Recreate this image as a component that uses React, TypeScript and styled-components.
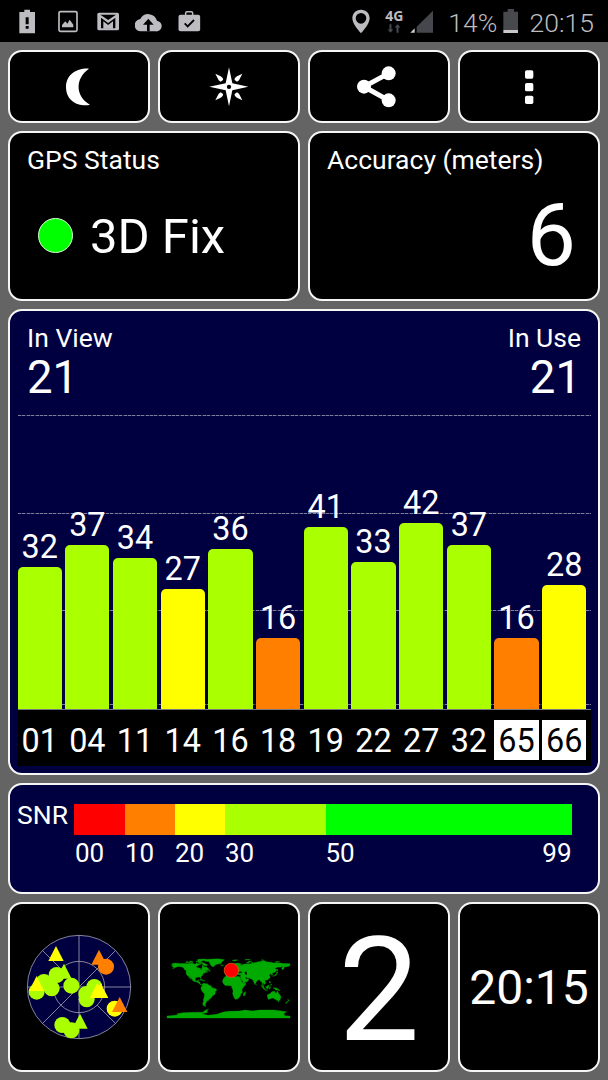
import React from "react";
import styled, { createGlobalStyle } from "styled-components";

const GlobalStyle = createGlobalStyle`
  html, body { margin: 0; padding: 0; background: #646464; }
  * { box-sizing: border-box; }
  svg { display: block; flex: none; }
`;

const NAVY = "#000040";
const LIME = "#aaff00";
const YELLOW = "#ffff00";
const ORANGE = "#ff8000";

const Screen = styled.div`
  width: 608px;
  height: 1080px;
  overflow: hidden;
  background: #646464;
  color: #fff;
  font-family: Roboto, "Liberation Sans", sans-serif;
  display: flex;
  flex-direction: column;
`;

const StatusBar = styled.header`
  height: 42px;
  flex: none;
  background: #000;
  color: #bdbdc1;
  display: flex;
  justify-content: space-between;
  padding: 0 14px 0 19px;
`;

const StatusGroup = styled.div`
  display: flex;
  align-items: center;
`;

const Network = styled.div`
  width: 21px;
  height: 42px;
  margin: 0 4.6px 0 14px;
  padding-top: 8px;
  display: flex;
  flex-direction: column;
  align-items: center;
`;

const NetworkLabel = styled.span`
  font: 700 14px/15px "Open Sans", "Noto Sans", sans-serif;
  height: 16px;
`;

const StatusText = styled.span<{ $width: number; $left: number }>`
  font-size: 26.5px;
  font-weight: 350;
  line-height: 46px;
  height: 42px;
  width: ${(p) => p.$width}px;
  margin-left: ${(p) => p.$left}px;
  white-space: nowrap;
`;

const Dashboard = styled.main`
  display: grid;
  grid-template-columns: repeat(4, 142px);
  grid-template-rows: 73px 170px 466px 111px 170px;
  gap: 8px;
  padding: 8px;
`;

const Card = styled.section<{ $span?: number; $navy?: boolean }>`
  grid-column: span ${(p) => p.$span ?? 1};
  border: 2px solid #f6f6f6;
  border-radius: 14px;
  background: ${(p) => (p.$navy ? NAVY : "#000")};
  display: flex;
  flex-direction: column;
  min-width: 0;
`;

const CenterCard = styled(Card)`
  align-items: center;
  justify-content: center;
`;

const ActionButton = styled.button`
  border: 2px solid #f6f6f6;
  border-radius: 14px;
  background: #000;
  padding: 0;
  display: flex;
  align-items: center;
  justify-content: center;
`;

const Label = styled.div`
  font-size: 26.5px;
  line-height: 30px;
  white-space: nowrap;
`;

const CardTitle = styled(Label)`
  margin: 12px 0 0 17px;
`;

const FixRow = styled.div`
  display: flex;
  align-items: center;
  height: 60px;
  margin: 30px 0 0 28px;
  gap: 17px;
`;

const FixLamp = styled.span`
  width: 35px;
  height: 35px;
  border-radius: 50%;
  border: 1px solid #d8ffd8;
  background: #00ff00;
`;

const FixText = styled.span`
  font-size: 49px;
  line-height: 60px;
  padding-top: 3px;
`;

const AccuracyValue = styled.div`
  font-size: 87.5px;
  line-height: 90px;
  margin: 15px 22px 0 0;
  text-align: right;
`;

const Counts = styled.div`
  display: flex;
  justify-content: space-between;
  padding: 12px 17px 0;
  height: 104px;
`;

const Count = styled.div<{ $right?: boolean }>`
  text-align: ${(p) => (p.$right ? "right" : "left")};
`;

const CountValue = styled.div`
  font-size: 45.5px;
  line-height: 50px;
`;

const Chart = styled.div`
  position: relative;
  width: 573px;
  height: 295px;
  margin-left: 7.6px;
  border-bottom: 1px solid #77777f;
  display: flex;
  align-items: flex-end;
  gap: 3.5px;
`;

const GridLine = styled.div`
  position: absolute;
  left: 0;
  right: 0;
  height: 1px;
  background: repeating-linear-gradient(90deg, #7d7d9c 0 3px, #2a2a58 3px 4.4px);
`;

const BarColumn = styled.div`
  position: relative;
  width: 44.2px;
  flex: none;
  display: flex;
  flex-direction: column;
  align-items: center;
`;

const BarValue = styled.span`
  font-size: 32.4px;
  line-height: 32px;
  margin-bottom: 4px;
`;

const Bar = styled.div<{ $color: string }>`
  width: 100%;
  border-radius: 5px 5px 0 0;
  background: ${(p) => p.$color};
`;

const Axis = styled.div`
  width: 573px;
  height: 56px;
  margin-left: 7.6px;
  background: #000;
  display: flex;
  align-items: center;
  gap: 3.5px;
  padding-top: 4px;
`;

const SatelliteId = styled.span<{ $inverse: boolean }>`
  width: 44.2px;
  height: 40px;
  flex: none;
  text-align: center;
  font-size: 32.4px;
  line-height: 43px;
  color: ${(p) => (p.$inverse ? "#000" : "#fff")};
  background: ${(p) => (p.$inverse ? "#fff" : "transparent")};
`;

const SnrRow = styled.div`
  display: flex;
  padding: 19px 0 0 7px;
`;

const SnrLabel = styled(Label)`
  width: 57px;
  line-height: 22px;
`;

const Scale = styled.div`
  display: flex;
`;

const ScaleStep = styled.div<{ $width: number }>`
  width: ${(p) => p.$width}px;
  font-size: 26px;
  line-height: 37px;
  display: flex;
  flex-direction: column;
`;

const Swatch = styled.div<{ $color: string }>`
  height: 31px;
  background: ${(p) => p.$color};
`;

const StepLabels = styled.div<{ $first: boolean }>`
  display: flex;
  justify-content: space-between;
  padding-left: ${(p) => (p.$first ? 1 : 0)}px;
  padding-right: 0.5px;
`;

const BigNumber = styled.div`
  font-size: 145px;
  line-height: 170px;
  padding-top: 5px;
`;

const Clock = styled.div`
  font-size: 48px;
  line-height: 60px;
  padding-top: 1px;
  white-space: nowrap;
`;

const GREY = "#bdbdc1";

function StatusIcon({ x, w, children }: { x: number; w: number; children: React.ReactNode }) {
  return (
    <svg width={w / 3} height={42} viewBox={`${x} 0 ${w} 126`} fill={GREY}>
      {children}
    </svg>
  );
}

const bars = [
  { id: "01", snr: 32 },
  { id: "04", snr: 37 },
  { id: "11", snr: 34 },
  { id: "14", snr: 27 },
  { id: "16", snr: 36 },
  { id: "18", snr: 16 },
  { id: "19", snr: 41 },
  { id: "22", snr: 33 },
  { id: "27", snr: 42 },
  { id: "32", snr: 37 },
  { id: "65", snr: 16 },
  { id: "66", snr: 28 },
];

const snrColor = (v: number) => (v < 10 ? "#ff0000" : v < 20 ? ORANGE : v < 30 ? YELLOW : v < 50 ? LIME : "#00ff00");

const steps = [
  { labels: ["00"], width: 51, color: "#ff0000" },
  { labels: ["10"], width: 50, color: ORANGE },
  { labels: ["20"], width: 50, color: YELLOW },
  { labels: ["30"], width: 100.5, color: LIME },
  { labels: ["50", "99"], width: 246.5, color: "#00ff00" },
];

/* Coastlines as longitude,latitude pairs */
const land = [
  "-168,66 -162,67 -166,69 -156,71 -141,70 -128,70 -115,68 -108,68 -96,68 -94,72 -90,69 -82,69 -81,67 -86,66 -94,61 -94,58.5 -88,57 -82,55 -82,52.5 -79,51.5 -79,54.5 -77,57 -78,62 -73,62 -69,59 -65,60 -62,57 -57,53 -60,50 -66,50 -70,47 -65,49 -64,46 -60,46 -66,43.5 -70,43.5 -70,41.5 -74,40.5 -76,37 -76,35 -81,31.5 -80,26 -81.5,25.5 -83,29.5 -85,30 -90,29.5 -94,29.5 -97,27.5 -97.5,22 -95,18.5 -91,18.7 -90,21 -87,21.5 -88,16 -83.5,15 -83.5,11 -81,9 -77,8.5 -80,7.5 -83,8.5 -86,11 -88,13 -94,16 -99,16.7 -105,20 -105.5,22.5 -109,26 -112.5,31 -114.7,31.5 -110,24 -110,23 -112,25 -115,28 -117,32.5 -120.5,34.5 -124,40 -124,47.5 -123,49 -128,51 -130,55 -134,58.5 -140,60 -146,61 -151,59.5 -154,58.5 -160,55.5 -164,54.7 -158,58 -162,59 -165,61 -165,63 -161,64.5 -166,64.5",
  "-64,67 -62,66 -65,62.5 -72,64 -78,65 -73,68 -80,70 -89,71 -88,73.5 -80,73.5 -72,71",
  "-117,69 -105,69 -102,70 -106,73 -117,73",
  "-125,72 -117,73 -120,76 -125,74",
  "-90,77 -80,76 -62,82 -70,83.2 -90,82",
  "-95,75 -80,74.5 -80,76 -95,77",
  "-115,75 -105,75 -105,77 -115,76.5",
  "-73,78 -68,76 -58,75.5 -54,70 -53,66 -48,61 -43,60 -40,65 -32,68 -22,70 -19,75 -12,81 -30,83.5 -60,82",
  "-85,22 -80,23.5 -74,20.5 -78,20",
  "-74,18.3 -73,20 -68.5,18.5",
  "-59,48 -56,51.5 -53,47",
  "-77,8.5 -75,11 -72,12 -71,11 -62,10.7 -57,6 -51,4.5 -50,0 -44,-2.5 -40,-3 -35,-6 -35,-9 -39,-13 -39,-18 -41,-22 -48,-25 -49,-28.5 -53.5,-33.5 -58,-34 -57,-38 -62,-39 -65,-41 -63.5,-42.5 -67,-46 -66,-48 -69,-50.5 -68.5,-52.5 -65.5,-55 -71,-55 -75,-51 -75.5,-46.5 -73,-42 -73.5,-37 -71.5,-30 -70,-20 -71,-18 -76,-14 -79,-8 -81,-5 -80,-2.5 -80,1 -77.5,3",
  "-6,36 10,37.5 11,34 20,31 25,32 32,31.5 34,28 37,21 39,16 43,12 51,12 50,8 44,1 39,-6 41,-15 35,-20 35.5,-24 33,-26 32,-29 26,-34 20,-35 18,-33 15,-27 12,-18 13.5,-12 12,-5 9,0 9.5,4 5,4.3 -4,5.2 -8,4.4 -13,8.5 -17,14.5 -17,21 -13,28 -9,32",
  "49,-12 50,-16 47,-25 44,-25 44,-18",
  "-9,37 -9,43 -2,43.5 -1,46 -4.5,48.5 2,51 8,54 8,57 10.5,57.5 10,54 19,54.5 22,57.5 24,57.5 23.5,59 30,60 22,60 21,63 25,65 22,66 17,61 18.5,60 16,56.5 13,55.5 11,59 7,58 5,61 10,64 15,68.5 25,71 31,70.5 41,67 40,66 33,66.5 37,64 44,66 44,68.5 54,68.5 60,69 68,69 67,72.5 72,72.5 73,68 75,72.5 80,73 87,75 98,76 104,77.7 113,74 127,73.5 130,71 140,72.5 152,71 160,70 170,70 180,69 180,65 177,64.5 179,62.5 170,60 163,59.5 163,56 156.7,51 156,57 163,62 155,59.5 142,59 135,54.5 141,53 140,48 135,43.5 130,42.5 127.5,39.5 129.5,36 126.5,34.5 126.5,37.5 124.5,40 121.5,39 118,39 122.5,37 119,35 122,31 121,28 116,23 110,21 108,21.5 106,19 109,13 107,10.5 105,8.6 102.5,12.5 100.5,13.5 99.5,10 103.5,4 103.5,1.5 101,3 98.5,8 98,16 94.5,16 91.5,22.5 87,21.5 80.5,15.5 80,12 77.5,8 73,17 72.5,21 69,22 66.5,25 57,27 50,30 48,30 51,25 52,24 56,26 60,22.5 55,17 45,13 43,13 42,17 39,21 35,28 34.5,31.5 36,36.5 30,36.5 27,37 26.5,40 29,41.2 35,42 41.5,41.5 37,45 39,47 33,46 28,44 28,41.5 23,40.5 24,38 22.5,36.5 19.5,40 19.5,42 13.5,45.5 12.5,44 18.5,40 16,38 12,42 8.5,44.3 3,43 3,41.5 -0.5,39 -2,36.8",
  "-5,50 1,51 0,53 -3,58.5 -6,57 -3,54",
  "-10,52 -6,52 -6,55 -10,54",
  "-24,65.5 -14,65 -18,63.5",
  "52,71 58,71 68,77 60,76",
  "11,79 20,80.5 27,80 17,76.7",
  "48,80 60,80 64,81.5 50,81.5",
  "95,79 105,79 98,81",
  "138,75 150,75 142,76.2",
  "130,31.5 132,34 136,36 140,40 141,41.5 142,39.5 140,35.5 135,33.7",
  "140,42 142,45.5 145,43.5",
  "142,46 144,49 143,54 142,53",
  "120.5,18.5 122,18 121.5,14 124,13 120,13.5",
  "122,7 126,9.5 125.5,6",
  "95,5.5 98,4 106,-3 105.5,-6 102,-4",
  "105,-6.3 114,-7.5 114,-9 106,-7.8",
  "109,1.5 113,3 117,7 119,5 117,0 116,-4 111,-3",
  "119.5,-5.5 119,-1 121,1 125,1.5 121,0 123,-1 121,-2.5 122.5,-5 120.5,-3",
  "131,-1 135,-1.5 141,-2.7 147,-6 150.5,-10.5 144,-8 138,-8.3 137,-5 133,-4",
  "114,-22 122,-18 126,-14 131,-11.5 136,-12 135.5,-15 140,-17.5 142.5,-11 145.5,-15 149,-21 153,-25 153,-31 150,-37.5 146,-39 140,-38 138,-34 135.5,-35 131,-31.5 124,-33 118,-35 115,-34 115.5,-31 113.5,-26",
  "145,-41 148,-41 147,-43.5",
  "173,-35 178,-38 175,-41.5 175,-38",
  "172.5,-41 174,-42 169,-46.5 166.5,-46",
  "80,9 82,7 80.5,6",
  "-180,-90 -180,-84 -150,-81 -150,-77 -135,-74.5 -100,-73 -75,-73 -68,-67 -58,-63.5 -62,-67 -62,-74 -78,-77 -60,-82 -35,-79 -15,-72.5 0,-70 30,-69.5 50,-66.5 70,-69 90,-66.5 130,-66 150,-68.5 170,-71.5 162,-77 165,-83 180,-84 180,-90",
];

function WorldMap() {
  return (
    <svg width={132} height={64} viewBox="24 45 396 192">
      <g
        transform="translate(220.5 142) scale(1.025 -1.025)"
        fill="#00aa00"
        stroke="#00aa00"
        strokeWidth={1}
      >
        {land.map((points, i) => (
          <polygon key={i} points={points} />
        ))}
        <polygon points="47,45 53,46.5 54,37 49,38" fill="#000" stroke="none" />
      </g>
      <circle cx={229} cy={91} r={21.5} fill="#ff0000" stroke="#e07020" strokeWidth={2} />
    </svg>
  );
}

const satDots = [
  [140, 165, LIME], [102, 186, LIME], [125, 205, LIME], [80, 215, LIME], [184, 197, LIME],
  [253, 201, LIME], [229, 222, LIME], [230, 238, LIME], [157, 315, LIME], [184, 331, LIME],
  [314, 266, YELLOW], [288, 140, ORANGE],
] as const;

const satTriangles = [
  [162, 176, LIME], [210, 326, LIME], [138, 123, YELLOW], [80, 213, YELLOW],
  [262, 234, YELLOW], [272, 234, YELLOW], [267, 134, ORANGE], [329, 276, ORANGE],
] as const;

function SkyPlot() {
  return (
    <svg width={106} height={106} viewBox="48 42 318 318">
      <g stroke="#a4a4b4" strokeWidth={2.4} fill="none">
        <circle cx={207} cy={201} r={155} fill={NAVY} />
        <circle cx={207} cy={201} r={77} />
        <path d="M207 46V356M52 201H362M97 91L152 146M262 256L317 311M317 91L97 311" />
      </g>
      {satDots.map(([x, y, c], i) => (
        <circle key={i} cx={x} cy={y} r={24} fill={c} />
      ))}
      {satTriangles.map(([x, y, c], i) => (
        <path key={i} d={`M${x - 23} ${y}L${x} ${y - 45}L${x + 23} ${y}Z`} fill={c} />
      ))}
    </svg>
  );
}

export default function App() {
  return (
    <Screen>
      <GlobalStyle />
      <StatusBar>
        <StatusGroup>
          <StatusIcon x={57} w={116}>
            <path d="M58 36H73V29H90V36H105V100H58Z" />
            <path d="M77 52H86V73H77ZM77 78H86V86H77Z" fill="#000" />
          </StatusIcon>
          <StatusIcon x={173} w={117}>
            <rect x={176} y={35} width={54} height={59} rx={4} fill="none" stroke={GREY} strokeWidth={5} />
            <path d="M185 82V75L195 64L201 71L208 59L219 74V82Z" />
          </StatusIcon>
          <StatusIcon x={290} w={116}>
            <rect x={291} y={38} width={65} height={53} rx={5} />
            <path d="M300 44H347L323.5 60Z" fill="#000" />
            <path d="M302 85V53L323.5 69L345 53V85Z" fill="#000" />
            <path d="M309 86V64L323.5 75L338 64V86Z" fill={GREY} />
          </StatusIcon>
          <StatusIcon x={406} w={128}>
            <path d="M425 94A18 18 0 0 1 422 57A27 27 0 0 1 472 62A16 16 0 0 1 468 94Z" />
            <path d="M446 56L462 74H450V94H442V74H430Z" fill="#000" />
          </StatusIcon>
          <StatusIcon x={534} w={68}>
            <path d="M557 46V39Q557 35 561 35H574Q578 35 578 39V46" fill="none" stroke={GREY} strokeWidth={4.5} />
            <rect x={535.5} y={44} width={65} height={50} rx={6} />
            <path d="M554 70L563 79L582 60" fill="none" stroke="#000" strokeWidth={5.5} />
          </StatusIcon>
        </StatusGroup>
        <StatusGroup>
          <StatusIcon x={143} w={54}>
            <path fillRule="evenodd" d="M170 29C154 29 144 41 144 55C144 73 170 100 170 100S196 73 196 55C196 41 186 29 170 29ZM170 39A16 16 0 1 1 170 71A16 16 0 1 1 170 39Z" />
          </StatusIcon>
          <Network>
            <NetworkLabel>4G</NetworkLabel>
            <svg width={14} height={9} viewBox="251 71 42 28">
              <path d="M258 72H264V88H270L261 98L252 88H258ZM280 98H286V82H292L283 72L274 82H280Z" fill="#494b54" />
            </svg>
          </Network>
          <StatusIcon x={316} w={73}>
            <path d="M388 32V98H339V80Z" fill="#45474c" />
            <path d="M333 85V98H320Z" fill="#d0d0d0" />
          </StatusIcon>
          <StatusText $width={53.3} $left={14.7}>14%</StatusText>
          <StatusIcon x={593} w={50}>
            <path d="M597 35H610V27H629V35H642V90H597Z" fill="#47494d" />
            <path d="M597 90H642V99H597Z" fill="#c9c9c9" />
          </StatusIcon>
          <StatusText $width={64.4} $left={11.3}>20:15</StatusText>
        </StatusGroup>
      </StatusBar>

      <Dashboard>
        <ActionButton aria-label="Night mode">
          <svg width={142} height={69} viewBox="24 155 426 207" fill="#fff">
            <path d="M267 205C248 201 198 212 198 260C198 307 242 320 270 313C226 288 224 235 267 205Z" />
          </svg>
        </ActionButton>
        <ActionButton aria-label="Compass">
          <svg width={142} height={69} viewBox="474 155 426 207" fill="#fff">
            <path d="M687 201L697 249L745 259.5L697 270L687 318L677 270L628 259.5L677 249Z" />
            <path d="M646 220L662 228Q671 234 669 239L662 244L656 240ZM727 220L711 228Q702 234 704 239L711 244L717 240ZM646 300L662 292Q671 286 669 281L662 276L656 280ZM727 300L711 292Q702 286 704 281L711 276L717 280Z" />
            <circle cx={687} cy={259.5} r={6.5} fill="#000" />
          </svg>
        </ActionButton>
        <ActionButton aria-label="Share">
          <svg width={142} height={69} viewBox="12 155 426 207" fill="#fff">
            <path d="M254 219L180 259L254 300" fill="none" stroke="#fff" strokeWidth={15} />
            <circle cx={254} cy={219} r={21} />
            <circle cx={180} cy={259} r={21} />
            <circle cx={254} cy={300} r={21} />
          </svg>
        </ActionButton>
        <ActionButton aria-label="More options">
          <svg width={142} height={69} viewBox="462 155 426 207" fill="#fff">
            <rect x={663} y={210} width={25} height={25} rx={5} />
            <rect x={663} y={248} width={25} height={25} rx={5} />
            <rect x={663} y={286} width={25} height={25} rx={5} />
          </svg>
        </ActionButton>

        <Card $span={2}>
          <CardTitle>GPS Status</CardTitle>
          <FixRow>
            <FixLamp />
            <FixText>3D Fix</FixText>
          </FixRow>
        </Card>
        <Card $span={2}>
          <CardTitle>Accuracy (meters)</CardTitle>
          <AccuracyValue>6</AccuracyValue>
        </Card>

        <Card $span={4} $navy>
          <Counts>
            <Count>
              <Label>In View</Label>
              <CountValue>21</CountValue>
            </Count>
            <Count $right>
              <Label>In Use</Label>
              <CountValue>21</CountValue>
            </Count>
          </Counts>
          <Chart>
            {[0, 98, 195, 289].map((top) => (
              <GridLine key={top} style={{ top }} />
            ))}
            {bars.map((b) => (
              <BarColumn key={b.id}>
                <BarValue>{b.snr}</BarValue>
                <Bar $color={snrColor(b.snr)} style={{ height: b.snr * 4.44 }} />
              </BarColumn>
            ))}
          </Chart>
          <Axis>
            {bars.map((b) => (
              <SatelliteId key={b.id} $inverse={Number(b.id) > 64}>
                {b.id}
              </SatelliteId>
            ))}
          </Axis>
        </Card>

        <Card $span={4} $navy>
          <SnrRow>
            <SnrLabel>SNR</SnrLabel>
            <Scale>
              {steps.map((s, i) => (
                <ScaleStep key={s.color} $width={s.width}>
                  <Swatch $color={s.color} />
                  <StepLabels $first={i === 0}>
                    {s.labels.map((t) => (
                      <span key={t}>{t}</span>
                    ))}
                  </StepLabels>
                </ScaleStep>
              ))}
            </Scale>
          </SnrRow>
        </Card>

        <CenterCard>
          <SkyPlot />
        </CenterCard>
        <CenterCard>
          <WorldMap />
        </CenterCard>
        <CenterCard>
          <BigNumber>2</BigNumber>
        </CenterCard>
        <CenterCard>
          <Clock>20:15</Clock>
        </CenterCard>
      </Dashboard>
    </Screen>
  );
}
